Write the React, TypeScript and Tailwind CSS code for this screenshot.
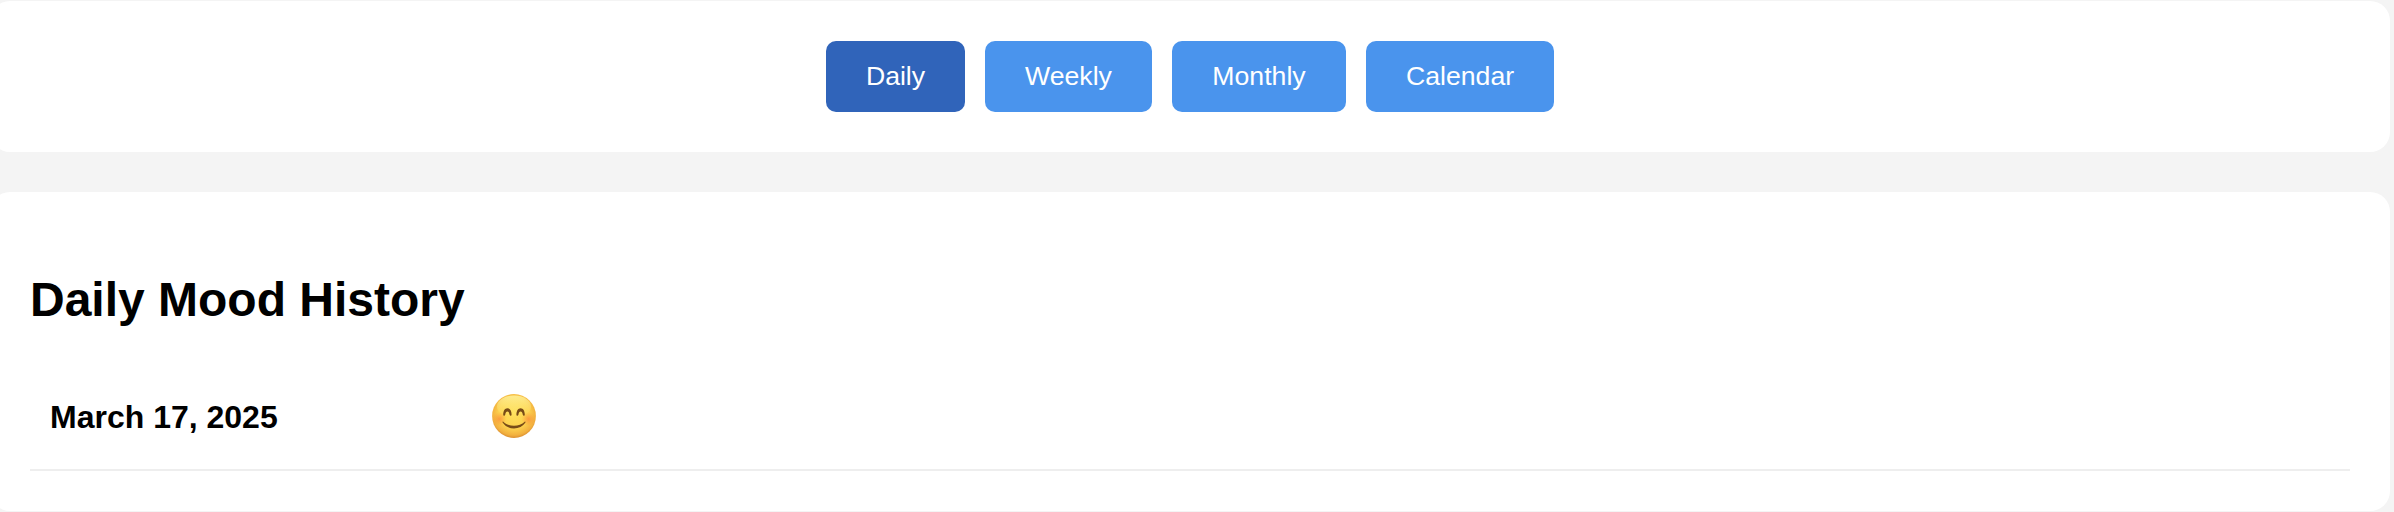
import React from "react";

type Tab = { label: string; width: string };

const tabs: Tab[] = [
  { label: "Daily", width: "w-[139px]" },
  { label: "Weekly", width: "w-[167px]" },
  { label: "Monthly", width: "w-[174px]" },
  { label: "Calendar", width: "w-[188px]" },
];

function SmilingFace() {
  return (
    <svg viewBox="0 0 44 44" className="mb-0.5 h-11 w-11" role="img" aria-label="Smiling face">
      <defs>
        <radialGradient id="face" cx="0.5" cy="0.44" r="0.58">
          <stop offset="0" stopColor="#ffe05a" />
          <stop offset="0.6" stopColor="#fcd04e" />
          <stop offset="0.86" stopColor="#f2b03e" />
          <stop offset="1" stopColor="#d4852c" />
        </radialGradient>
        <linearGradient id="shine" x1="0" y1="0" x2="0" y2="1">
          <stop offset="0" stopColor="#fff7a8" stopOpacity="0.75" />
          <stop offset="1" stopColor="#fff07a" stopOpacity="0" />
        </linearGradient>
        <radialGradient id="cheek">
          <stop offset="0" stopColor="#fb7a35" stopOpacity="0.6" />
          <stop offset="1" stopColor="#fb8a35" stopOpacity="0" />
        </radialGradient>
      </defs>
      <circle cx="22" cy="22" r="21.9" fill="url(#face)" />
      <ellipse cx="22" cy="12.5" rx="17" ry="11" fill="url(#shine)" />
      <circle cx="7.5" cy="25" r="7" fill="url(#cheek)" />
      <circle cx="36.5" cy="25" r="7" fill="url(#cheek)" />
      <g fill="#784b17">
        <path d="M11.2 20.6C11.2 17 12.8 14.2 15.4 14.2C18 14.2 19.6 17 19.6 20.6C19.6 22.2 17.9 22.3 17.6 20.8C17.2 18.8 16.5 17.6 15.4 17.6C14.3 17.6 13.6 18.8 13.2 20.8C12.9 22.3 11.2 22.2 11.2 20.6Z" />
        <path d="M24.4 20.6C24.4 17 26 14.2 28.6 14.2C31.2 14.2 32.8 17 32.8 20.6C32.8 22.2 31.1 22.3 30.8 20.8C30.4 18.8 29.7 17.6 28.6 17.6C27.5 17.6 26.8 18.8 26.4 20.8C26.1 22.3 24.4 22.2 24.4 20.6Z" />
        <path d="M11.3 27.7C16.5 33 27.5 33 32.7 27.7C33.3 27.2 33.8 27.9 33.4 28.6C28.6 36.4 15.4 36.4 10.6 28.6C10.2 27.9 10.7 27.2 11.3 27.7Z" />
      </g>
    </svg>
  );
}

export default function App() {
  return (
    <div className="h-[512px] overflow-hidden bg-[#f4f4f4] pt-px font-['Liberation_Sans',Arial,sans-serif] text-black">
      <main className="-ml-2.5 flex w-[2400px] flex-col gap-10">
        <nav className="flex h-[151px] items-center justify-center gap-5 rounded-[20px] bg-white">
          {tabs.map((tab, i) => (
            <button
              key={tab.label}
              className={`${tab.width} h-[71px] rounded-[10px] pb-px text-center text-[26.667px] leading-[31px] text-white ${
                i === 0 ? "bg-[#3064ba]" : "bg-[#4a94ed]"
              }`}
            >
              {tab.label}
            </button>
          ))}
        </nav>
        <section className="h-[319px] rounded-[20px] bg-white px-10 pt-20">
          <h2 className="text-[48px] leading-[55px] font-bold">Daily Mood History</h2>
          <div className="mt-10 flex h-[104px] items-center border-b-2 border-[#eee] px-5 pb-0.5">
            <span className="w-[442px] text-[32px] leading-9 font-bold">March 17, 2025</span>
            <SmilingFace />
          </div>
        </section>
      </main>
    </div>
  );
}
